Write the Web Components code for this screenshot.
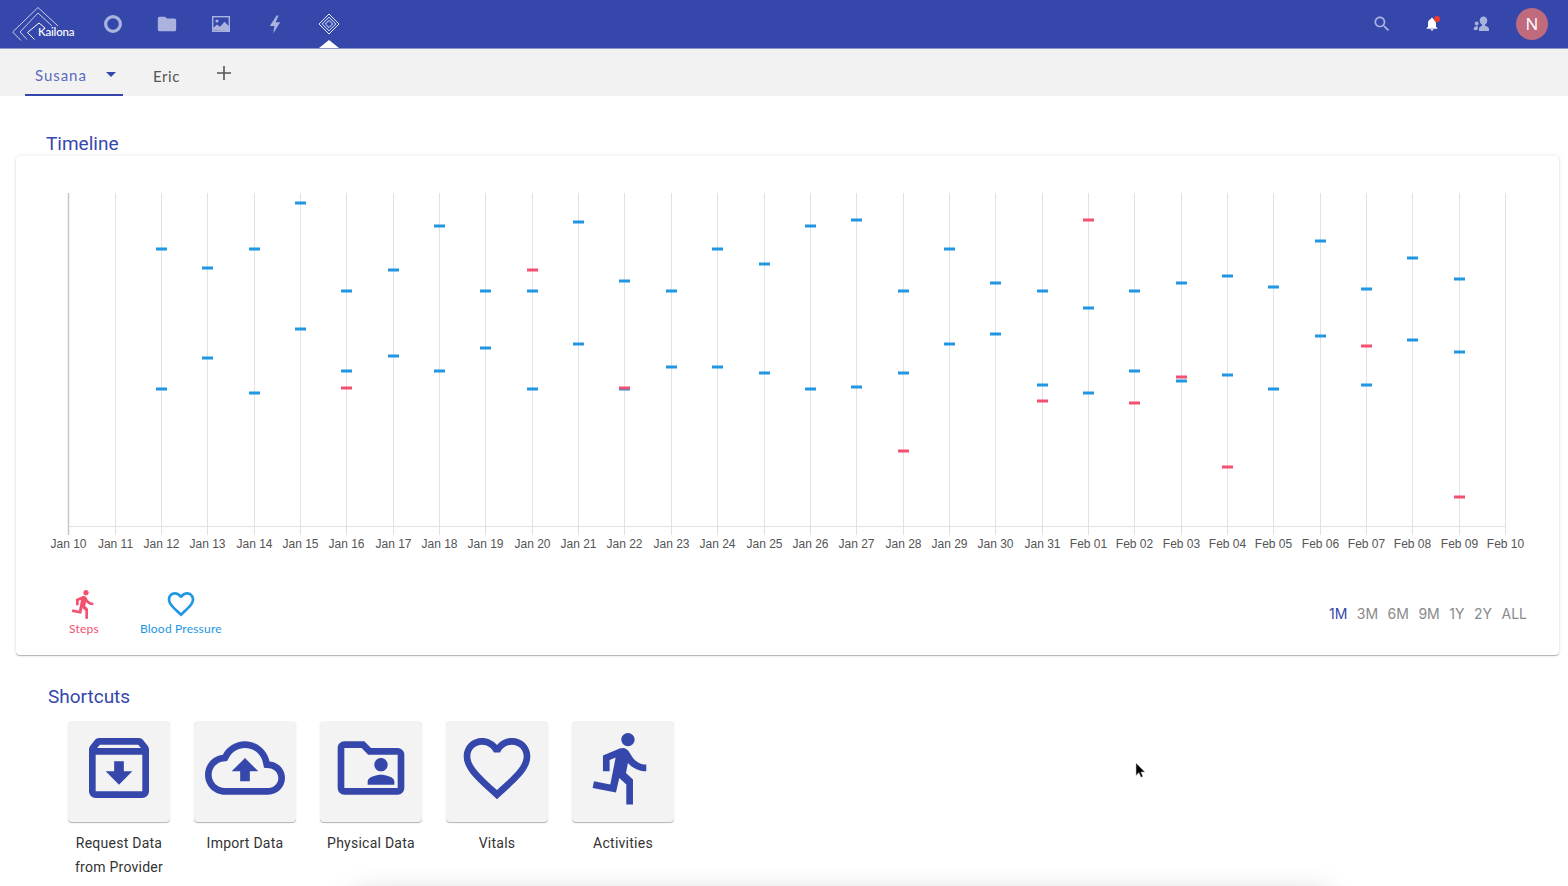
<!DOCTYPE html>
<html>
<head>
<meta charset="utf-8">
<title>Kailona</title>
<style>
  html, body { margin: 0; height: 886px; overflow: hidden; background: #fff; }
  body { position: relative; font-family: Roboto, sans-serif; }
</style>
</head>
<body>
<kl-app-bar></kl-app-bar>
<kl-person-tabs></kl-person-tabs>
<kl-section heading="Timeline" style="--heading-left: 46px; --heading-top: 36px;">
  <kl-timeline></kl-timeline>
</kl-section>
<kl-section heading="Shortcuts" style="--heading-left: 48px; --heading-top: 30px;">
  <kl-shortcuts>
    <kl-shortcut icon="archive">Request Data<br>from Provider</kl-shortcut>
    <kl-shortcut icon="cloud">Import Data</kl-shortcut>
    <kl-shortcut icon="folder">Physical Data</kl-shortcut>
    <kl-shortcut icon="heart">Vitals</kl-shortcut>
    <kl-shortcut icon="run">Activities</kl-shortcut>
  </kl-shortcuts>
</kl-section>
<kl-bottom-sheet-shadow></kl-bottom-sheet-shadow>
<kl-cursor></kl-cursor>

<script>
const ICONS = {
  archive: 'M20.54 5.23l-1.39-1.68C18.88 3.21 18.47 3 18 3H6c-.47 0-.88.21-1.16.55L3.46 5.23C3.17 5.57 3 6.02 3 6.5V19c0 1.1.9 2 2 2h14c1.1 0 2-.9 2-2V6.5c0-.48-.17-.93-.46-1.27zM6.24 5h11.52l.81.97H5.44l.8-.97zM5 19V8h14v11H5zm8.45-9h-2.9v3H8l4 4 4-4h-2.55z',
  cloud: 'M19.35 10.04C18.67 6.59 15.64 4 12 4 9.11 4 6.6 5.64 5.35 8.04 2.34 8.36 0 10.91 0 14c0 3.31 2.69 6 6 6h13c2.76 0 5-2.24 5-5 0-2.64-2.05-4.78-4.65-4.96zM19 18H6c-2.21 0-4-1.79-4-4 0-2.05 1.53-3.76 3.56-3.97l1.07-.11.5-.95C8.08 7.14 9.94 6 12 6c2.62 0 4.88 1.86 5.39 4.43l.3 1.5 1.53.11c1.56.1 2.78 1.41 2.78 2.96 0 1.65-1.35 3-3 3zM8 13h2.55v3h2.9v-3H16l-4-4z',
  folder: 'M20 6h-8l-2-2H4c-1.1 0-2 .9-2 2v12c0 1.1.9 2 2 2h16c1.1 0 2-.9 2-2V8c0-1.1-.9-2-2-2zm0 12H4V6h5.17l2 2H20v10zm-5-5c1.1 0 2-.9 2-2s-.9-2-2-2-2 .9-2 2 .9 2 2 2zm-4 4h8v-1c0-1.33-2.67-2-4-2s-4 .67-4 2v1z',
  heart: 'M16.5 3c-1.74 0-3.41.81-4.5 2.09C10.91 3.81 9.24 3 7.5 3 4.42 3 2 5.42 2 8.5c0 3.78 3.4 6.86 8.55 11.54L12 21.35l1.45-1.32C18.6 15.36 22 12.28 22 8.5 22 5.42 19.58 3 16.5 3zm-4.4 15.55l-.1.1-.1-.1C7.14 14.24 4 11.39 4 8.5 4 6.5 5.5 5 7.5 5c1.54 0 3.04.99 3.57 2.36h1.87C13.46 5.99 14.96 5 16.5 5c2 0 3.5 1.5 3.5 3.5 0 2.89-3.14 5.74-7.9 10.05z',
  run: 'M13.49 5.48c1.1 0 2-.9 2-2s-.9-2-2-2-2 .9-2 2 .9 2 2 2zm-3.6 13.9l1-4.4 2.1 2v6h2v-7.5l-2.1-2 .6-3c1.3 1.5 3.3 2.5 5.5 2.5v-2c-1.9 0-3.5-1-4.3-2.4l-1-1.6c-.4-.6-1-1-1.7-1-.3 0-.5.1-.8.1l-5.2 2.2v4.7h2v-3.4l1.8-.7-1.6 8.1-4.9-1-.4 2 7 1.4z',
  navFolder: 'M10 4H4c-1.1 0-1.99.9-1.99 2L2 18c0 1.1.9 2 2 2h16c1.1 0 2-.9 2-2V8c0-1.1-.9-2-2-2h-8l-2-2z',
  search: 'M15.5 14h-.79l-.28-.27C15.41 12.59 16 11.11 16 9.5 16 5.91 13.09 3 9.5 3S3 5.91 3 9.5 5.91 16 9.5 16c1.61 0 3.09-.59 4.23-1.57l.27.28v.79l5 4.99L20.49 19l-4.99-5zm-6 0C7.01 14 5 11.99 5 9.5S7.01 5 9.5 5 14 7.01 14 9.5 11.99 14 9.5 14z',
  bell: 'M12 22c1.1 0 2-.9 2-2h-4c0 1.1.89 2 2 2zm6-6v-5c0-3.07-1.64-5.64-4.5-6.32V4c0-.83-.67-1.5-1.5-1.5s-1.5.67-1.5 1.5v.68C7.63 5.36 6 7.92 6 11v5l-2 2v1h16v-1l-2-2z'
};

const svgIcon = (name, size) =>
  `<svg width="${size}" height="${size}" viewBox="0 0 24 24" fill="currentColor"><path d="${ICONS[name]}"/></svg>`;

class KlAppBar extends HTMLElement {
  connectedCallback() {
    const root = this.attachShadow({ mode: 'open' });
    root.innerHTML = `
      <style>
        :host { display: flex; align-items: center; height: 48px; background: #3547ab; border-bottom: 1px solid #8b96cf; color: #a9b3dd; }
        .logo { width: 86px; height: 48px; margin-left: 4px; flex: none; position: relative; }
        .logo svg { display: block; }
        .logo span { position: absolute; left: 34px; top: 24px; font: 500 11.5px/15px Lato, sans-serif; letter-spacing: -.2px; color: #fff; }
        nav { display: flex; }
        .nav-item { width: 54px; height: 48px; display: flex; align-items: center; justify-content: center; position: relative; }
        .nav-item.active { color: #fff; }
        .nav-item.active::after { content: ''; position: absolute; left: 17px; bottom: 0; border: 10px solid transparent; border-top: 0; border-bottom: 8px solid #fff; }
        .actions { margin-left: auto; margin-right: 20px; display: flex; align-items: center; }
        .action { width: 50px; display: flex; justify-content: center; position: relative; }
        .bell { color: #fff; }
        .bell i { position: absolute; left: 27px; top: 0; width: 6px; height: 6px; border-radius: 50%; background: #ef3a2c; }
        .avatar { width: 32px; height: 32px; margin-left: 9px; border-radius: 50%; background: #bf6b7d; color: #fff; font: 400 17px/32px "Open Sans", sans-serif; text-align: center; }
      </style>
      <div class="logo">
        <svg width="86" height="48" viewBox="0 0 86 48" fill="none" stroke="#c8cee9" stroke-width="1">
          <path d="M54 26 34 7.500 8.700 32 17 40.500"/>
          <path d="M48 26 34 13 16 32 23 39.500"/>
          <path d="M41 28 35 23 23.500 32.500 30.500 39.500" stroke="#fff"/>
        </svg>
        <span>Kailona</span>
      </div>
      <nav>
        <div class="nav-item" style="margin-left:-4px">
          <svg width="24" height="24" viewBox="0 0 24 24" fill="none" stroke="currentColor" stroke-width="3.200"><circle cx="12" cy="12" r="7.400"/></svg>
        </div>
        <div class="nav-item">${svgIcon('navFolder', 22)}</div>
        <div class="nav-item">
          <svg width="22" height="22" viewBox="0 0 22 22"><rect x="2.700" y="3.700" width="16.600" height="14.600" fill="none" stroke="currentColor" stroke-width="1.400"/><circle cx="7" cy="8" r="1.600" fill="currentColor"/><path d="M3 17.500V15l4-3.500 3 2.200 4.500-5 4.500 4.500v4.800z" fill="currentColor"/></svg>
        </div>
        <div class="nav-item">
          <svg width="22" height="22" viewBox="0 0 22 22" fill="currentColor"><path d="M12.600 2.500 5.800 13h4.600l-1.200 7.500 7-11.200h-4.600l3-6.800z"/></svg>
        </div>
        <div class="nav-item active">
          <svg width="22" height="22" viewBox="0 0 22 22" fill="none" stroke="currentColor" stroke-width=".9"><path d="M11 1 21 11 11 21 1 11z"/><path d="M11 4.200 17.800 11 11 17.800 4.200 11z"/><path d="M11 7.400 14.600 11 11 14.600 7.400 11z"/></svg>
        </div>
      </nav>
      <div class="actions">
        <div class="action">${svgIcon('search', 20)}</div>
        <div class="action bell">${svgIcon('bell', 16)}<i></i></div>
        <div class="action">
          <svg width="18" height="18" viewBox="0 0 18 18" fill="currentColor"><path d="M10.500 1.500c2.200 0 3.800 1.800 3.800 4.100 0 1.800-.9 3.300-2.200 4v1.200c1.800.5 3.900 1.400 3.900 3.200V16H6v-2c0-1.800 1.600-2.700 2.900-3.200V9.600c-1.300-.7-2.200-2.200-2.200-4 0-2.300 1.600-4.100 3.800-4.100z"/><circle cx="3.700" cy="8.500" r="1.900"/><path d="M.8 15v-1.500c0-1.300 1.500-2.200 3.100-2.200.5 0 .9.100 1.300.2-.4.700-.6 1.500-.6 2.500v1z"/></svg>
        </div>
        <div class="avatar">N</div>
      </div>`;
  }
}
customElements.define('kl-app-bar', KlAppBar);

class KlPersonTabs extends HTMLElement {
  connectedCallback() {
    const root = this.attachShadow({ mode: 'open' });
    root.innerHTML = `
      <style>
        :host { display: flex; align-items: stretch; height: 47px; padding-left: 25px; background: #f2f2f2; font: 400 15px/20px Lato, sans-serif; letter-spacing: .6px; }
        .tab { display: flex; align-items: center; height: 47px; box-sizing: border-box; color: #555; }
        .tab.active { width: 98px; padding: 6px 0 0 10px; border-bottom: 2px solid #3547ab; color: #5b6bbf; letter-spacing: .95px; }
        .caret { margin-left: 19px; border: 5px solid transparent; border-top: 5px solid #3547ab; border-bottom: 0; }
        .eric { margin-left: 30px; padding-top: 7px; }
        .plus { margin-left: 36px; margin-top: 0; color: #555; display: flex; align-items: center; }
      </style>
      <div class="tab active">Susana<span class="caret"></span></div>
      <div class="tab eric">Eric</div>
      <div class="plus"><svg width="16" height="16" viewBox="0 0 16 16" fill="currentColor"><path d="M7.200 1h1.600v6.200H15v1.600H8.800V15H7.200V8.800H1V7.200h6.200z"/></svg></div>`;
  }
}
customElements.define('kl-person-tabs', KlPersonTabs);

class KlSection extends HTMLElement {
  connectedCallback() {
    const root = this.attachShadow({ mode: 'open' });
    root.innerHTML = `
      <style>
        :host { display: block; }
        h2 { margin: 0; padding: var(--heading-top) 0 0 var(--heading-left); font: 400 19px/24px Roboto, sans-serif; color: #3547ab; }
      </style>
      <h2>${this.getAttribute('heading')}</h2>
      <slot></slot>`;
  }
}
customElements.define('kl-section', KlSection);

// columns are [blue readings], [red readings], index 0 is Jan 10
const READINGS = {
  2: [[249, 389], []], 3: [[268, 358], []], 4: [[249, 393], []], 5: [[203, 329], []],
  6: [[291, 371], [388]], 7: [[270, 356], []], 8: [[226, 371], []], 9: [[291, 348], []],
  10: [[291, 389], [270]], 11: [[222, 344], []], 12: [[281, 389], [388]], 13: [[291, 367], []],
  14: [[249, 367], []], 15: [[264, 373], []], 16: [[226, 389], []], 17: [[220, 387], []],
  18: [[291, 373], [451]], 19: [[249, 344], []], 20: [[283, 334], []], 21: [[291, 385], [401]],
  22: [[308, 393], [220]], 23: [[291, 371], [403]], 24: [[283, 381], [377]], 25: [[276, 375], [467]],
  26: [[287, 389], []], 27: [[241, 336], []], 28: [[289, 385], [346]], 29: [[258, 340], []],
  30: [[279, 352], [497]]
};

class KlTimeline extends HTMLElement {
  connectedCallback() {
    const root = this.attachShadow({ mode: 'open' });
    const top = 156; // card top in page px, chart values above are page y
    const left = 16;
    const step = 46.34;
    let lines = '', labels = '', marks = '';
    for (let i = 0; i < 32; i++) {
      const x = Math.round(68.4 + step * i) + 0.5 - left;
      const date = i < 22 ? `Jan ${i + 10}` : `Feb ${String(i - 21).padStart(2, '0')}`;
      lines += `<line x1="${x}" x2="${x}" y1="${193 - top}" y2="${535 - top}" stroke="${i ? '#e2e2e2' : '#c8c8c8'}" stroke-width="${i ? 1 : 1.5}"/>`;
      labels += `<text x="${x}" y="${548 - top}">${date}</text>`;
      const column = READINGS[i];
      if (!column) continue;
      column[0].forEach(y => { marks += `<rect x="${x - 5.5}" y="${y - 1.5 - top}" width="11" height="3" fill="#2196e3"/>`; });
      column[1].forEach(y => { marks += `<rect x="${x - 5.5}" y="${y - 1.5 - top}" width="11" height="3" fill="#f4506f"/>`; });
    }
    root.innerHTML = `
      <style>
        :host { display: block; position: relative; box-sizing: border-box; height: 499px; margin: 0 9px 0 16px; background: #fff; border-radius: 4px; box-shadow: 0 1px 1px rgba(0,0,0,.28), 0 0 4px rgba(0,0,0,.1); }
        svg.chart { display: block; }
        text { font: 12px "Liberation Sans", sans-serif; fill: #555; text-anchor: middle; }
        footer { display: flex; align-items: flex-start; justify-content: space-between; padding: 0 32px 0 52px; }
        .legend { display: flex; gap: 40px; margin-top: 27px; }
        .item { display: flex; flex-direction: column; align-items: center; font: 400 12px/16px Lato, sans-serif; letter-spacing: .2px; }
        .item svg { display: block; height: 32px; margin-bottom: 1px; }
        .steps { color: #f4506f; }
        .bp { color: #2196e3; }
        .ranges { display: flex; gap: 9.5px; margin-top: 43px; font: 400 14px/20px Inter, sans-serif; color: #8a8a8a; }
        .ranges .on { color: #3547ab; }
      </style>
      <svg class="chart" width="1543" height="405" viewBox="0 0 1543 405">
        ${lines}
        <line x1="${69 - left}" x2="${1505 - left}" y1="${526.5 - top}" y2="${526.5 - top}" stroke="#e2e2e2"/>
        ${labels}
        ${marks}
      </svg>
      <footer>
        <div class="legend">
          <div class="item steps">${svgIcon('run', 32)}Steps</div>
          <div class="item bp">${svgIcon('heart', 32)}Blood Pressure</div>
        </div>
        <div class="ranges"><span class="on">1M</span><span>3M</span><span>6M</span><span>9M</span><span>1Y</span><span>2Y</span><span>ALL</span></div>
      </footer>`;
  }
}
customElements.define('kl-timeline', KlTimeline);

class KlShortcuts extends HTMLElement {
  connectedCallback() {
    const root = this.attachShadow({ mode: 'open' });
    root.innerHTML = `
      <style>:host { display: flex; gap: 24px; padding: 12px 0 0 68px; }</style>
      <slot></slot>`;
  }
}
customElements.define('kl-shortcuts', KlShortcuts);

class KlShortcut extends HTMLElement {
  connectedCallback() {
    const root = this.attachShadow({ mode: 'open' });
    root.innerHTML = `
      <style>
        :host { display: block; width: 102px; font: 400 14px/24px Roboto, sans-serif; letter-spacing: .25px; color: #333; text-align: center; }
        .tile { height: 101px; margin-bottom: 9px; display: flex; align-items: center; justify-content: center; background: #f3f3f4; color: #3547ab; border-radius: 4px; box-shadow: 0 1px 1px rgba(0,0,0,.3); }
        .tile svg { margin-bottom: 8px; }
        .label { white-space: nowrap; margin: 0 -10px; }
      </style>
      <div class="tile">${svgIcon(this.getAttribute('icon'), 80)}</div>
      <div class="label"><slot></slot></div>`;
  }
}
customElements.define('kl-shortcut', KlShortcut);

// sheet peeking up from below the window, only its blurred edge shows
class KlBottomSheetShadow extends HTMLElement {
  connectedCallback() {
    const root = this.attachShadow({ mode: 'open' });
    root.innerHTML = `
      <style>
        :host { display: block; position: absolute; left: 300px; top: 836px; width: 1080px; height: 50px; }
        svg { display: block; }
      </style>
      <svg width="1080" height="50" viewBox="0 0 1080 50">
        <defs><filter id="soft" x="-10%" y="-100%" width="120%" height="300%"><feGaussianBlur stdDeviation="14"/></filter></defs>
        <rect x="50" y="58" width="985" height="40" rx="20" fill="#000" fill-opacity=".2" filter="url(#soft)"/>
      </svg>`;
  }
}
customElements.define('kl-bottom-sheet-shadow', KlBottomSheetShadow);

class KlCursor extends HTMLElement {
  connectedCallback() {
    const root = this.attachShadow({ mode: 'open' });
    root.innerHTML = `
      <style>:host { display: block; position: absolute; left: 1135px; top: 762px; width: 11px; height: 17px; }</style>
      <svg width="11" height="17" viewBox="0 0 11 17"><path d="M1 1v12.500l3-2.800 1.900 4.600 2-.8-1.900-4.400h3.900z" fill="#000" stroke="#ccc" stroke-width=".6"/></svg>`;
  }
}
customElements.define('kl-cursor', KlCursor);
</script>
</body>
</html>
